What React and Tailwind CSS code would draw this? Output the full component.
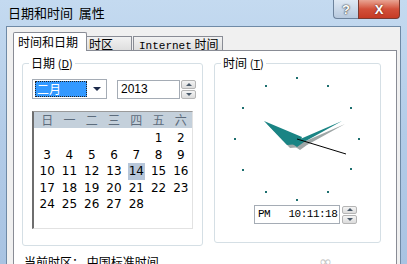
import React from 'react';

const cjk = { fontFamily: '"Noto Sans CJK SC", "Liberation Sans", sans-serif' };
const mono = { fontFamily: '"Liberation Mono", "Noto Sans CJK SC", monospace' };

const weeks = [
  ['', '', '', '', '', '1', '2'],
  ['3', '4', '5', '6', '7', '8', '9'],
  ['10', '11', '12', '13', '14', '15', '16'],
  ['17', '18', '19', '20', '21', '22', '23'],
  ['24', '25', '26', '27', '28', '', ''],
];

function Spin({ h = 'h-[19px]' }) {
  return (
    <div className={`w-[15px] ${h} flex flex-col gap-px`}>
      <div className="flex-1 bg-gradient-to-b from-[#f4f4f4] to-[#dcdcdc] border border-[#b5b5b5] rounded-[2px] flex items-center justify-center">
        <div className="w-0 h-0 border-x-[3px] border-x-transparent border-b-[3px] border-b-[#4a5a6a]" />
      </div>
      <div className="flex-1 bg-gradient-to-b from-[#f4f4f4] to-[#dcdcdc] border border-[#b5b5b5] rounded-[2px] flex items-center justify-center">
        <div className="w-0 h-0 border-x-[3px] border-x-transparent border-t-[3px] border-t-[#4a5a6a]" />
      </div>
    </div>
  );
}

function Clock() {
  // coordinates relative to the group box (origin x=215, y=64)
  const cx = 82, cy = 75;
  const dots = [];
  for (let i = 0; i < 12; i++) {
    const a = (i * 30 * Math.PI) / 180;
    dots.push([cx + Math.sin(a) * 62, cy - Math.cos(a) * 61]);
  }
  return (
    <svg width="165" height="143" className="block">
      {dots.map(([x, y], i) => (
        <rect key={i} x={Math.round(x) - 1} y={Math.round(y) - 1} width="2" height="2" fill="#1d6f6f" />
      ))}
      {/* shadows */}
      <polygon points="49,57 87,73 84,80 72,81" fill="#9ea6a6" transform="translate(3,3)" />
      <polygon points="127,57 76,79 82,83 89,78" fill="#9ea6a6" transform="translate(3,3)" />
      {/* hour hand */}
      <polygon points="49,57 87,73 84,80 72,81" fill="#1a8484" />
      {/* minute hand */}
      <polygon points="127,57 76,79 82,83 89,78" fill="#1a8484" />
      {/* second hand */}
      <line x1={cx} y1={cy} x2="131" y2="90" stroke="#000" strokeWidth="1" />
    </svg>
  );
}

export default function App() {
  return (
    <div className="w-[407px] h-[264px] overflow-hidden flex flex-col bg-gradient-to-b from-[#c4daf0] via-[#b3cce8] to-[#a8c3e2]" style={cjk}>
      {/* title bar */}
      <div className="h-[26px] shrink-0 flex items-start">
        <div className="pl-2 pt-[5px] text-[13px] leading-[16px] text-black flex-1">日期和时间&nbsp;&nbsp;属性</div>
        <div className="flex mr-[7px]">
          <div className="w-[25px] h-[19px] rounded-bl-[4px] border border-[#6d839c] border-t-0 border-r-0 bg-gradient-to-b from-[#dfe9f4] to-[#b7c9de] flex items-center justify-center">
            <span className="text-[13px] font-bold text-white leading-none" style={{ fontFamily: '"Liberation Sans", sans-serif', textShadow: '0 0 2px #333, 0 0 1px #333' }}>?</span>
          </div>
          <div className="w-[42px] h-[19px] rounded-br-[4px] border border-[#7a3a30] border-t-0 bg-gradient-to-b from-[#e8a493] via-[#d2503a] to-[#c63b25] flex items-center justify-center">
            <span className="text-[13px] font-bold text-white leading-none" style={{ fontFamily: '"Liberation Sans", sans-serif', textShadow: '0 0 2px #4a1a10' }}>X</span>
          </div>
        </div>
      </div>

      {/* client area */}
      <div className="flex-1 ml-[6px] mr-[6px] border border-[#6f8aa6] border-b-0 bg-[#f0f0f0] pl-[6px] pr-[3px] pt-[5px] flex flex-col">
        {/* tabs */}
        <div className="flex items-end h-[19px] relative z-10">
          <div className="h-[19px] w-[74px] bg-white border border-[#898c95] border-b-0 rounded-t-[2px] text-[12px] leading-[18px] pl-[4px] text-black">时间和日期</div>
          <div className="h-[15px] w-[45px] bg-gradient-to-b from-[#f2f2f2] to-[#dedede] border border-[#898c95] border-l-0 text-[12px] leading-[14px] pl-[2px] text-black">时区</div>
          <div className="h-[15px] w-[90px] ml-px bg-gradient-to-b from-[#f2f2f2] to-[#dedede] border border-[#898c95] text-[12px] leading-[14px] pl-[5px] text-black">
            <span style={mono} className="text-[11px]">Internet</span> 时间
          </div>
        </div>

        {/* tab panel */}
        <div className="-mt-px flex-1 bg-white border border-[#898c95] border-b-0 pl-[8px] pt-[12px] flex flex-col">
          <div className="flex gap-[11px]">
            {/* date group */}
            <div className="relative w-[181px] h-[183px] border border-[#d5dfe5] rounded-[3px] pl-[9px] pt-[15px]">
              <div className="absolute -top-[9px] left-[6px] bg-white px-[2px] text-[12px] leading-[16px] text-black">日期 <span className="text-[11px]">(<u>D</u>)</span></div>
              <div className="flex items-center">
                <div className="w-[75px] h-[20px] border border-[#a5acb5] flex items-center pl-[2px]">
                  <div className="w-[52px] h-[16px] bg-[#3399ff] border border-dotted border-[#222] text-white text-[12px] leading-[14px] pl-[1px]">二月</div>
                  <div className="flex-1 flex justify-center">
                    <div className="w-0 h-0 border-x-[4px] border-x-transparent border-t-[4px] border-t-[#1c2a4a]" />
                  </div>
                </div>
                <div className="ml-[10px] w-[63px] h-[19px] border border-[#a5acb5] text-[12px] leading-[17px] pl-[3px] text-black" style={{ fontFamily: '"Liberation Sans", sans-serif' }}>2013</div>
                <div className="ml-px"><Spin /></div>
              </div>
              {/* calendar */}
              <div className="mt-[12px] w-[161px] h-[118px] border-l-2 border-l-[#6e6e6e] border-t border-t-[#9a9a9a] border-r border-r-[#e2e2e2] border-b border-b-[#e2e2e2]">
                <div className="h-[16px] bg-[#c4d0db] grid grid-cols-7 text-[12px] leading-[16px] text-[#5d6c7c] text-center pl-[2px]">
                  {['日', '一', '二', '三', '四', '五', '六'].map((d) => (
                    <div key={d}>{d}</div>
                  ))}
                </div>
                <div className="pt-[2px] pl-[2px]" style={{ fontFamily: '"DejaVu Sans", "Liberation Sans", sans-serif' }}>
                  {weeks.map((w, i) => (
                    <div key={i} className="grid grid-cols-7 h-[16.5px] text-[12px] leading-[16px] text-black text-center">
                      {w.map((d, j) => (
                        <div key={j} className="flex justify-center">
                          <span className={d === '14' ? 'bg-[#b7c6d9] px-[1px]' : ''}>{d}</span>
                        </div>
                      ))}
                    </div>
                  ))}
                </div>
              </div>
            </div>

            {/* time group */}
            <div className="relative w-[167px] h-[180px] border border-[#d5dfe5] rounded-[3px]">
              <div className="absolute -top-[9px] left-[6px] bg-white px-[2px] text-[12px] leading-[16px] text-black">时间 <span className="text-[11px]">(<u>T</u>)</span></div>
              <Clock />
              <div className="flex items-center ml-[39px] -mt-[2px]">
                <div className="w-[86px] h-[19px] border border-[#a5acb5] text-[11px] tracking-[-0.5px] leading-[17px] text-black pl-[3px] whitespace-pre" style={mono}>PM   10:11:18</div>
                <div className="ml-[2px]"><Spin h="h-[18px]" /></div>
              </div>
            </div>
          </div>

          <div className="flex mt-[8px] text-[12px] leading-[16px] text-black">
            <div className="pl-[2px]">当前时区：&nbsp;中国标准时间</div>
            <div className="ml-auto mr-[64px] text-[#c8c8c8] text-[16px] leading-[16px]" style={{ fontFamily: '"DejaVu Sans", sans-serif' }}>∞</div>
          </div>
        </div>
      </div>
    </div>
  );
}
